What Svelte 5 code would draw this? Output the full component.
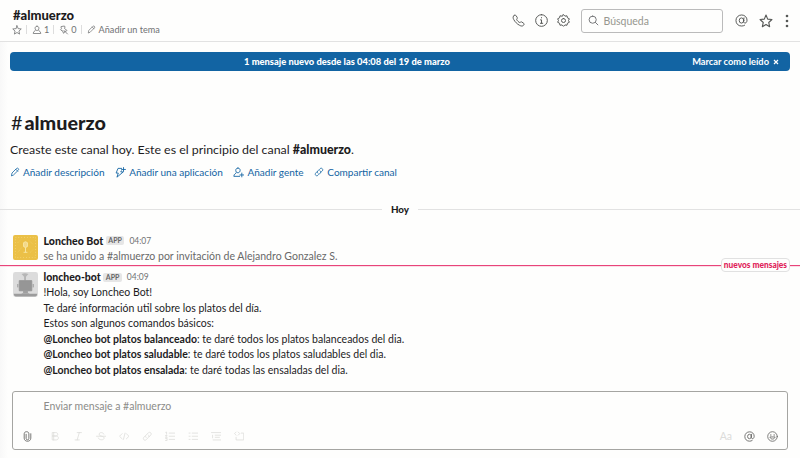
<script>
  const commands = [
    ['@Loncheo bot platos balanceado', ': te daré todos los platos balanceados del dia.'],
    ['@Loncheo bot platos saludable', ': te daré todos los platos saludables del dia.'],
    ['@Loncheo bot platos ensalada', ': te daré todas las ensaladas del dia.']
  ];
  const icons = {
    star: 'M10 1.500l2.400 5.800 6.100.6-4.600 4.200 1.300 6.100-5.200-3.200-5.200 3.200 1.300-6.100-4.600-4.200 6.100-.6z',
    person: 'M10 2.500c-2.5 0-3.8 1.700-3.800 4s1.400 4.500 3.800 4.500 3.800-2.200 3.800-4.500-1.300-4-3.800-4zM7 10.500c0 2-4.500 1.500-4.500 6.500h15c0-5-4.500-4.500-4.500-6.500',
    pin: 'M5 3l6-1 1 2-1 3 5 4-1.500 1.500-3 0-1 3-1.500 1-2-5-3-1-1-1 2-2-1-3zM10 11l7 7',
    pencil: 'M3 17l1-5 9-9c1-1 2.500-1 3.500 0s1 2.500 0 3.500l-9 9zM11.500 4.500l4 4',
    phone: 'M3 2.500c1.500-1.500 2.500-1 3.500.5l1.600 2.500c.7 1.200-.9 1.800-.9 2.900 0 1.200 3.500 4.700 4.700 4.700 1.100 0 1.700-1.600 2.900-.9l2.500 1.600c1.500 1 1.800 2 .5 3.500-1.500 1.700-3.800 1.500-6.200.1C8 15.500 4.500 12 2.600 8.400 1.300 6 1.300 4 3 2.500z',
    info: 'M10 1a9 9 0 100 18 9 9 0 000-18zM8.500 9H10v5M8.300 14.300h3.600M10 5.500v.5',
    gear: 'M10 1l2.200 2.300 3.200-.5.7 3.100 2.900 1.500-1.300 2.600 1.300 2.700-2.900 1.500-.7 3.100-3.200-.5L10 19l-2.200-2.200-3.200.5-.7-3.100L1 12.700 2.300 10 1 7.400l2.900-1.500.7-3.100 3.200.5zM10 6.900a3.100 3.100 0 100 6.200 3.100 3.100 0 000-6.200z',
    search: 'M8.500 2a6.500 6.500 0 100 13 6.500 6.500 0 000-13zM13.500 13.500L18 18',
    at: 'M13.500 10a3.500 4 0 11-7 0 3.500 4 0 017 0zM13.800 6l-.6 5c-.2 3 2.300 3.500 3.700 2.500C18 12.500 18.500 11 18.500 9.500 18.500 5 15 1.500 10.200 1.500S1.500 5 1.500 10s3.500 8.500 8.500 8.500c2 0 3.500-.4 4.800-1.200',
    bolt: 'M12 2.500H5.500L2 11h4l-2.500 7.500L15 9h-4.500l1-2M15.500 1v7M12 4.500h7',
    addperson: 'M9 2C6.500 2 5 3.700 5 6s1.500 4.500 4 4.500S13 8.300 13 6s-1.500-4-4-4zM6 10.500c0 2-4.500 1.500-4.500 6.500H12M16 11v7M12.500 14.500h7',
    link: 'M8 12.500c-2-2-1.500-3.500 0-5L12 3.500c3-3 7.500 1 4.500 4.500l-3 3M12 7.500c2 2 1.500 3.500 0 5l-4 4c-3 3-7.500-1-4.500-4.500l3-3',
    clip: 'M7.500 6v7.500c0 3.500 5 3.500 5 0V5c0-5-8.500-5-8.500 0v8c0 7.500 12 7.500 12 0V5',
    bold: 'M5 3h6c5 0 5 6.500 0 6.500H5zM5 9.500h7c5.500 0 5 7.500 0 7.500H5zM7 3v14',
    italic: 'M8 3h8M4 17h8M12 3L8 17',
    strike: 'M15 6c-1-4-9-4-9 0 0 3 3 3.500 5 4 3 .7 4.500 2 4.500 3.500 0 4.500-10 4.500-11 0M1 10h18',
    code: 'M6 5l-5 5 5 5M14 5l5 5-5 5M11.500 4l-3 12',
    ol: 'M8 4h11M8 10h11M8 16h11M1.500 2.500L3 2v4M1 8.500h3L1 12h3M1 14h3v4H1',
    ul: 'M8 4h11M8 10h11M8 16h11M2 4h2M2 10h2M2 16h2',
    quote: 'M1 3h18M8 8h11M8 12h8M4 17h15M3 8v5',
    block: 'M4 2L1 5l3 3M8 2l3 3-3 3M14 4h4.500v13H4v-5'
  };
  const format = ['bold', 'italic', 'strike', 'code', 'link', 'ol', 'ul', 'quote', 'block'];
</script>

{#snippet icon(name, size, weight = 1.6)}
  <svg class="icon" width={size} height={size} viewBox="0 0 20 20" stroke-width={weight}><path d={icons[name]} /></svg>
{/snippet}

<div class="app">
  <header>
    <div class="channel">
      <h1>#almuerzo</h1>
      <div class="meta">
        {@render icon('star', 10)}<i></i>{@render icon('person', 10)}<span class="n">1</span><i></i>{@render icon('pin', 10)}<span class="n">0</span><i></i>{@render icon('pencil', 9)}<span class="topic">Añadir un tema</span>
      </div>
    </div>
    <div class="tools">
      {@render icon('phone', 13, 1.5)}{@render icon('info', 13, 1.5)}{@render icon('gear', 13, 1.5)}
      <div class="search">{@render icon('search', 11, 1.7)}<span>Búsqueda</span></div>
      {@render icon('at', 13, 1.5)}{@render icon('star', 14, 1.6)}
      <svg class="dots" width="4" height="14" viewBox="0 0 4 14"><circle cx="2" cy="2" r="1.3" /><circle cx="2" cy="7" r="1.3" /><circle cx="2" cy="12" r="1.3" /></svg>
    </div>
  </header>

  <div class="banner">
    <span class="new">1 mensaje nuevo desde las 04:08 del 19 de marzo</span>
    <span class="mark">Marcar como leído</span>
    <svg width="6" height="6" viewBox="0 0 6 6"><path d="M1 1l4 4M5 1L1 5" stroke="#fff" stroke-width="1.2" /></svg>
  </div>

  <section class="intro">
    <h2><span>#</span>almuerzo</h2>
    <p>Creaste este canal hoy. Este es el principio del canal <b>#almuerzo</b>.</p>
    <nav>
      <a>{@render icon('pencil', 10)}<span>Añadir descripción</span></a>
      <a>{@render icon('bolt', 11)}<span>Añadir una aplicación</span></a>
      <a>{@render icon('addperson', 11)}<span>Añadir gente</span></a>
      <a>{@render icon('link', 10)}<span>Compartir canal</span></a>
    </nav>
  </section>

  <div class="day"><hr /><b>Hoy</b><hr /></div>

  <article class="first">
    <svg class="avatar" width="25" height="25" viewBox="0 0 26 26">
      <rect width="26" height="26" rx="2" fill="#ebc047" />
      <rect x="2.500" y="2.500" width="21" height="21" fill="none" stroke="#f2d36f" stroke-dasharray="1 2" />
      <path d="M5 18l4-5m8-7l4 4M5 8l3-3m10 13l3-3" stroke="#f0ce64" stroke-dasharray="1 1" />
      <path d="M11 8q2-2 4 0v4q-2 2-4 0zm2 5v5m-2 0h4" fill="#f3d98a" stroke="#f8e6a2" />
    </svg>
    <div class="body">
      <div class="who"><b>Loncheo Bot</b><em>APP</em><time>04:07</time></div>
      <p class="joined">se ha unido a #almuerzo por invitación de Alejandro Gonzalez S.</p>
    </div>
  </article>

  <div class="unread"><div class="rule"></div><span>nuevos mensajes</span><div class="rule tail"></div></div>

  <article class="second">
    <svg class="avatar" width="25" height="25" viewBox="0 0 26 26">
      <rect width="26" height="26" rx="2.500" fill="#dcdcdc" />
      <path d="M1 22.500h24v1q0 2-2 2H3q-2 0-2-2z" fill="#9c9c9c" />
      <path d="M12.500 4v5" stroke="#8f8f8f" />
      <path d="M9 2q3.500-1.500 7 0l-2.500 3h-2z" fill="#b6b6b6" />
      <path d="M6.500 9h13v10.500h-13zM5 12.500v3.500m16-3.500v3.500" fill="#969696" stroke="#969696" />
      <path d="M10.500 19.500h5v2l2 1h-9l2-1z" fill="#a0a0a0" />
    </svg>
    <div class="body">
      <div class="who"><b>loncheo-bot</b><em>APP</em><time>04:09</time></div>
      <p>!Hola, soy Loncheo Bot!</p>
      <p>Te daré información util sobre los platos del día.</p>
      <p>Estos son algunos comandos básicos:</p>
      {#each commands as [name, description]}
        <p><b>{name}</b>{description}</p>
      {/each}
    </div>
  </article>

  <footer>
    <div class="placeholder">Enviar mensaje a #almuerzo</div>
    <div class="bar">
      <span class="clip">{@render icon('clip', 11, 1.7)}</span>
      {#each format as name}<span class="fmt">{@render icon(name, 10.5, 1.5)}</span>{/each}
      <span class="aa">Aa</span>
      <span class="end">{@render icon('at', 11, 1.7)}</span>
      <span class="end">
        <svg class="icon" width="11" height="11" viewBox="0 0 20 20" stroke-width="1.6">
          <circle cx="10" cy="10" r="8.700" />
          <path d="M5.500 11.500c1 4.500 8 4.500 9 0z" />
          <circle class="eye" cx="7" cy="7.300" r="1.200" /><circle class="eye" cx="13" cy="7.300" r="1.200" />
        </svg>
      </span>
    </div>
  </footer>
</div>

<style>
  :global(body) { margin: 0; background: #fefefc; }
  .app { width: 800px; height: 458px; box-sizing: border-box; overflow: hidden; display: flex; flex-direction: column; font-family: Lato, "Liberation Sans", sans-serif; font-size: 10.5px; color: #1d1c1d; background: linear-gradient(90deg, #f8f8f8, #fefefd 8px); white-space: nowrap; }
  h1, h2, p { margin: 0; }
  .icon { fill: none; stroke: currentColor; stroke-linejoin: round; stroke-linecap: round; flex: none; display: block; }
  .eye { fill: currentColor; stroke: none; }
  header { height: 41px; border-bottom: 1px solid #e2e2e2; display: flex; justify-content: space-between; flex: none; background: #fefefd; }
  .channel { padding: 7px 0 0 13px; }
  h1 { font-size: 13px; line-height: 16px; font-weight: 900; }
  .meta { display: flex; align-items: center; height: 13px; color: #717274; font-size: 9.15px; margin-left: -1px; }
  .meta i { width: 1px; height: 9px; background: #ddd; margin: 0 5px 0 4px; }
  .meta .n { margin-left: 2px; }
  .topic { margin-left: 3px; }
  .tools { display: flex; align-items: center; color: #565856; padding-right: 11px; }
  .tools > .icon { margin-right: 9.5px; }
  .tools > .icon:nth-last-child(2) { margin-right: 12px; }
  .tools > .icon:nth-last-child(3) { margin-right: 11.5px; }
  .tools > .icon:nth-child(3) { margin-right: 10.5px; }
  .search { box-sizing: border-box; width: 142px; height: 24px; border: 1px solid #bbb; border-radius: 3px; display: flex; align-items: center; padding-left: 6px; gap: 5px; margin-right: 12px; color: #717274; }
  .search span { color: #97978f; }
  .dots { fill: #565856; }
  .banner { box-sizing: border-box; height: 19px; flex: none; margin: 10px 10px 0; border-radius: 4px; background: #1264a3; color: #fff; display: grid; grid-template-columns: 234px 1fr auto auto; align-items: center; padding-right: 11px; font-size: 9.3px; font-weight: 700; }
  .new { grid-column: 2; font-weight: 900; font-size: 9.37px; }
  .banner svg { margin-left: 4px; }
  .intro { padding: 39px 0 0 10px; height: 109px; }
  h2 { font-size: 19.75px; line-height: 25px; font-weight: 900; padding-left: 1px; }
  h2 span { font-weight: 400; margin-right: 2px; }
  .intro p { font-size: 12.38px; line-height: 18px; margin-top: 6px; }
  .intro b { font-weight: 900; }
  nav { display: flex; color: #1264a3; margin-top: 5.5px; height: 15px; font-size: 10.03px; }
  nav a { display: flex; align-items: center; gap: 3px; margin-right: 10.7px; }
  .day { display: flex; align-items: center; height: 14px; margin-top: -17px; font-size: 9.8px; flex: none; }
  hr { flex: 1; height: 1px; margin: 0; border: 0; background: #e2e2e2; }
  .day b { padding: 0 9px; font-weight: 900; }
  article { display: flex; padding-left: 13px; flex: none; }
  .avatar { flex: none; }
  .body { margin-left: 5.5px; }
  .first { margin-top: 19px; height: 26px; }
  .who { display: flex; align-items: center; height: 15.4px; }
  .who b { font-weight: 900; }
  em { font-style: normal; font-size: 7px; font-weight: 700; color: #666; background: #e6e6e6; border-radius: 2px; padding: 0 2.5px; line-height: 9px; margin: 0 5px 0 2.5px; }
  time { font-size: 8.5px; color: #717274; }
  .body p { line-height: 15.4px; }
  .first .body { margin-top: -2px; }
  .first .who b { font-size: 10.6px; }
  .body .joined { color: #696969; font-size: 10.54px; line-height: 16.4px; }
  .unread { display: flex; align-items: center; height: 14px; margin-top: -3px; flex: none; }
  .rule { flex: 1; height: 2px; background: linear-gradient(#e8447a 50%, #fbdde6 50%); margin-top: 1px; }
  .rule.tail { flex: 0 0 10px; }
  .unread span { box-sizing: border-box; height: 14px; line-height: 12px; border: 1px solid #e1e1e1; border-radius: 4px; padding: 0 2px; color: #e01e5a; font-size: 8.35px; font-weight: 900; background: #fefefd; }
  .second { height: 107px; }
  .second .body { margin-top: -2.5px; }
  .second .who { margin-bottom: .6px; }
  footer { box-sizing: border-box; height: 59px; margin: 12px 12px 0; border: 1px solid #a5a5a2; border-radius: 3px; padding-left: 30.5px; flex: none; background: #fefefd; }
  .placeholder { color: #8c8c89; line-height: 16px; margin-top: 6px; }
  .bar { display: flex; align-items: center; height: 14px; margin: 15px 9px 0 -21.5px; color: #6e6e6c; }
  .clip { width: 27.5px; }
  .fmt { width: 23px; color: #dcdcda; }
  .aa { margin-left: auto; color: #dcdcda; }
  .end { margin-left: 12px; }
</style>
